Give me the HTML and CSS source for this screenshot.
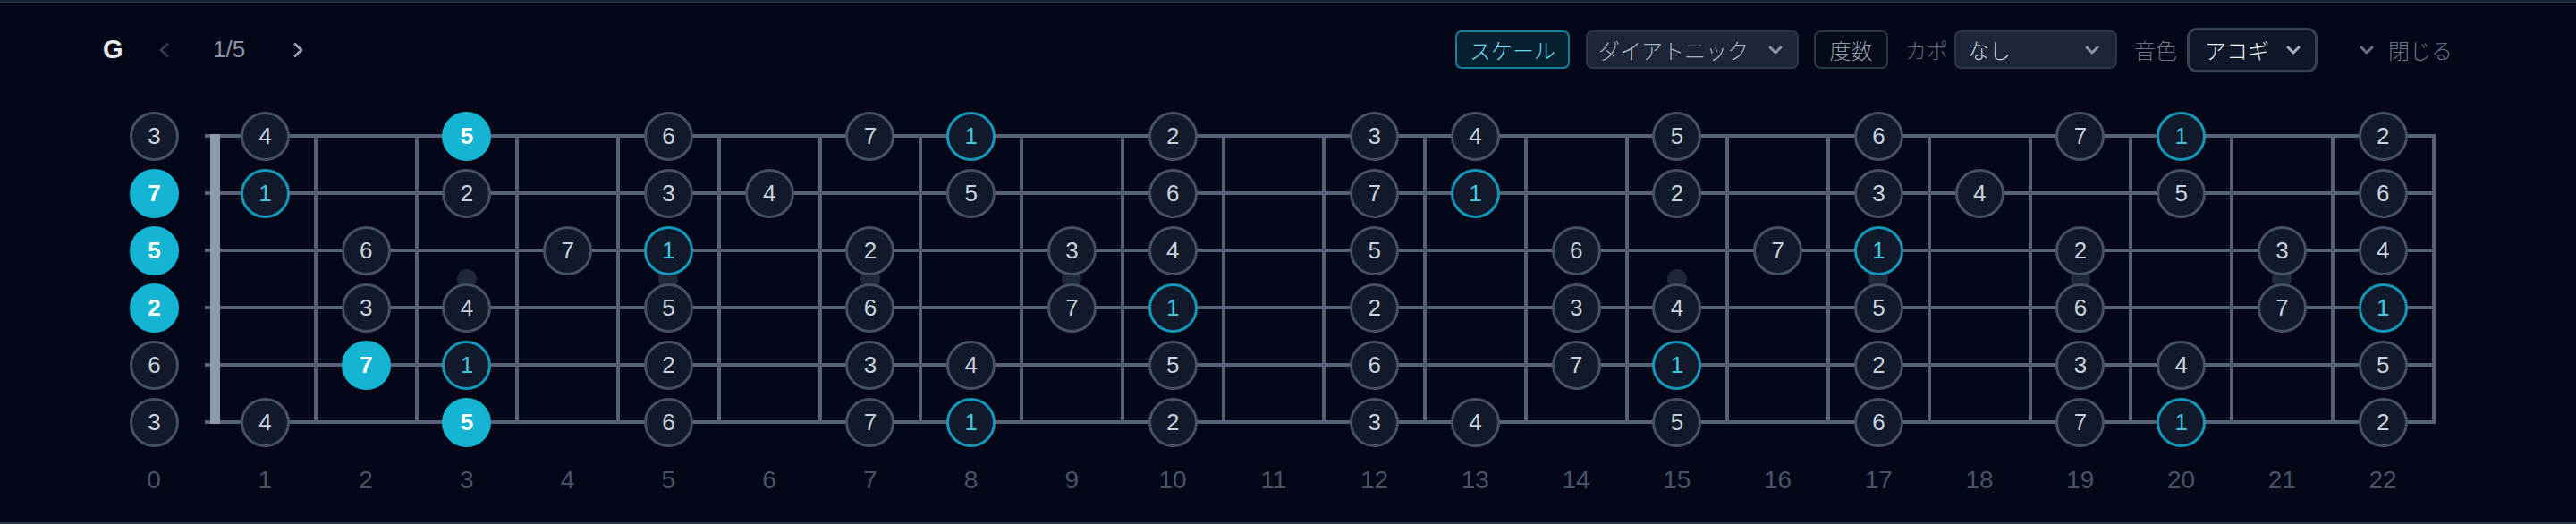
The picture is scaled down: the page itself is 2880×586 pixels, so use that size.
FILE: index.html
```html
<!DOCTYPE html>
<html lang="ja">
<head>
<meta charset="utf-8">
<title>Fretboard</title>
<link rel="stylesheet" href="styles.css">
</head>
<body>
<div class="app">
  <div class="topstrip"></div>
  <header class="toolbar">
    <div class="nav">
      <span class="key">G</span>
      <svg class="chev-l" width="12" height="16" viewBox="0 0 12 16"><polyline points="10,1.5 3,8 10,14.5" /></svg>
      <span class="page">1/5</span>
      <svg class="chev-r" width="12" height="16" viewBox="0 0 12 16"><polyline points="2,1.5 9,8 2,14.5" /></svg>
    </div>
    <div class="controls">
      <button class="btn btn-scale">スケール</button>
      <div class="select sel-scale"><span>ダイアトニック</span><svg class="dd" width="16" height="10" viewBox="0 0 16 10"><polyline points="2,2 8,8 14,2" /></svg></div>
      <button class="btn btn-deg">度数</button>
      <span class="label lbl-capo">カポ</span>
      <div class="select sel-capo"><span>なし</span><svg class="dd" width="16" height="10" viewBox="0 0 16 10"><polyline points="2,2 8,8 14,2" /></svg></div>
      <span class="label lbl-tone">音色</span>
      <div class="select sel-tone"><span>アコギ</span><svg class="dd" width="16" height="10" viewBox="0 0 16 10"><polyline points="2,2 8,8 14,2" /></svg></div>
      <div class="close"><svg class="dd" width="16" height="10" viewBox="0 0 16 10"><polyline points="2,2 8,8 14,2" /></svg><span class="close-text">閉じる</span></div>
    </div>
  </header>

  <section class="neck">
    <div class="open">
      <div class="note">3</div>
      <div class="note fill">7</div>
      <div class="note fill">5</div>
      <div class="note fill">2</div>
      <div class="note">6</div>
      <div class="note">3</div>
    </div>
    <div class="board">
      <div class="string s1"></div><div class="string s2"></div><div class="string s3"></div>
      <div class="string s4"></div><div class="string s5"></div><div class="string s6"></div>

      <div class="wire f1"></div><div class="wire f2"></div><div class="wire f3"></div><div class="wire f4"></div>
      <div class="wire f5"></div><div class="wire f6"></div><div class="wire f7"></div><div class="wire f8"></div>
      <div class="wire f9"></div><div class="wire f10"></div><div class="wire f11"></div><div class="wire f12"></div>
      <div class="wire f13"></div><div class="wire f14"></div><div class="wire f15"></div><div class="wire f16"></div>
      <div class="wire f17"></div><div class="wire f18"></div><div class="wire f19"></div><div class="wire f20"></div>
      <div class="wire f21"></div><div class="wire f22"></div>
      <div class="nut"></div>

      <div class="mark f3"></div><div class="mark f5"></div><div class="mark f7"></div><div class="mark f9"></div>
      <div class="mark f15"></div><div class="mark f17"></div><div class="mark f19"></div><div class="mark f21"></div>

      <!-- string 1 -->
      <div class="note s1 f1">4</div><div class="note fill s1 f3">5</div><div class="note s1 f5">6</div>
      <div class="note s1 f7">7</div><div class="note root s1 f8">1</div><div class="note s1 f10">2</div>
      <div class="note s1 f12">3</div><div class="note s1 f13">4</div><div class="note s1 f15">5</div>
      <div class="note s1 f17">6</div><div class="note s1 f19">7</div><div class="note root s1 f20">1</div>
      <div class="note s1 f22">2</div>
      <!-- string 2 -->
      <div class="note root s2 f1">1</div><div class="note s2 f3">2</div><div class="note s2 f5">3</div>
      <div class="note s2 f6">4</div><div class="note s2 f8">5</div><div class="note s2 f10">6</div>
      <div class="note s2 f12">7</div><div class="note root s2 f13">1</div><div class="note s2 f15">2</div>
      <div class="note s2 f17">3</div><div class="note s2 f18">4</div><div class="note s2 f20">5</div>
      <div class="note s2 f22">6</div>
      <!-- string 3 -->
      <div class="note s3 f2">6</div><div class="note s3 f4">7</div><div class="note root s3 f5">1</div>
      <div class="note s3 f7">2</div><div class="note s3 f9">3</div><div class="note s3 f10">4</div>
      <div class="note s3 f12">5</div><div class="note s3 f14">6</div><div class="note s3 f16">7</div>
      <div class="note root s3 f17">1</div><div class="note s3 f19">2</div><div class="note s3 f21">3</div>
      <div class="note s3 f22">4</div>
      <!-- string 4 -->
      <div class="note s4 f2">3</div><div class="note s4 f3">4</div><div class="note s4 f5">5</div>
      <div class="note s4 f7">6</div><div class="note s4 f9">7</div><div class="note root s4 f10">1</div>
      <div class="note s4 f12">2</div><div class="note s4 f14">3</div><div class="note s4 f15">4</div>
      <div class="note s4 f17">5</div><div class="note s4 f19">6</div><div class="note s4 f21">7</div>
      <div class="note root s4 f22">1</div>
      <!-- string 5 -->
      <div class="note fill s5 f2">7</div><div class="note root s5 f3">1</div><div class="note s5 f5">2</div>
      <div class="note s5 f7">3</div><div class="note s5 f8">4</div><div class="note s5 f10">5</div>
      <div class="note s5 f12">6</div><div class="note s5 f14">7</div><div class="note root s5 f15">1</div>
      <div class="note s5 f17">2</div><div class="note s5 f19">3</div><div class="note s5 f20">4</div>
      <div class="note s5 f22">5</div>
      <!-- string 6 -->
      <div class="note s6 f1">4</div><div class="note fill s6 f3">5</div><div class="note s6 f5">6</div>
      <div class="note s6 f7">7</div><div class="note root s6 f8">1</div><div class="note s6 f10">2</div>
      <div class="note s6 f12">3</div><div class="note s6 f13">4</div><div class="note s6 f15">5</div>
      <div class="note s6 f17">6</div><div class="note s6 f19">7</div><div class="note root s6 f20">1</div>
      <div class="note s6 f22">2</div>
    </div>
  </section>

  <div class="numbers">
    <span class="num0">0</span>
    <div class="numgrid">
      <span>1</span><span>2</span><span>3</span><span>4</span><span>5</span><span>6</span><span>7</span><span>8</span>
      <span>9</span><span>10</span><span>11</span><span>12</span><span>13</span><span>14</span><span>15</span><span>16</span>
      <span>17</span><span>18</span><span>19</span><span>20</span><span>21</span><span>22</span>
    </div>
  </div>
</div>
</body>
</html>
```

FILE: styles.css
```css
* { box-sizing: border-box; }
html, body { margin: 0; padding: 0; }
body {
  background: #030717;
  font-family: "Liberation Sans", Arial, sans-serif;
}
.app {
  width: 2880px;
  height: 586px;
  display: flex;
  flex-direction: column;
  background: #030717;
  border-bottom: 2px solid #2a3548;
}
.topstrip {
  height: 3px;
  background: #172033;
  border-bottom: 1px solid #263146;
  flex: none;
}

/* ---------- toolbar ---------- */
.toolbar {
  height: 105px;
  flex: none;
  display: flex;
  align-items: center;
  padding: 0 138px 0 115px;
}
.nav { display: flex; align-items: center; }
.key {
  font-weight: 700;
  font-size: 29px;
  color: #e8ebf0;
  width: 22px;
}
.nav svg polyline { fill: none; stroke-width: 3; stroke-linecap: round; stroke-linejoin: round; }
.chev-l { margin-left: 40px; }
.chev-l polyline { stroke: #323a4a; }
.chev-r polyline { stroke: #98a3b5; }
.page {
  margin-left: 49px;
  width: 40px;
  font-size: 26px;
  color: #8893a5;
}
.chev-r { margin-left: 50px; }

.controls {
  margin-left: auto;
  display: flex;
  align-items: center;
  font-family: "Noto Sans CJK JP", "Liberation Sans", sans-serif;
  font-size: 24px;
  font-weight: 300;
  line-height: 1;
}
.btn {
  font: inherit;
  height: 43px;
  border-radius: 7px;
  padding: 0;
  display: flex;
  align-items: center;
  justify-content: center;
}
.btn-scale {
  width: 128px;
  background: #06202f;
  border: 2px solid #12809e;
  color: #6fd9ee;
}
.btn-deg {
  width: 83px;
  margin-left: 17px;
  background: #060b18;
  border: 2px solid #2c3748;
  color: #939dae;
}
.select {
  height: 43px;
  border-radius: 7px;
  display: flex;
  align-items: center;
  justify-content: space-between;
  background: #1c2638;
  border: 2px solid #2b3649;
}
.dd { flex: none; }
.dd polyline { fill: none; stroke-width: 3; stroke-linecap: round; stroke-linejoin: round; }
.sel-scale {
  width: 238px;
  margin-left: 18px;
  padding: 0 16px 0 12px;
  color: #a9b3c2;
}
.sel-scale .dd polyline { stroke: #8a94a6; }
.label { color: #5d6779; }
.lbl-capo { margin-left: 19px; width: 55px; }
.sel-capo {
  width: 182px;
  padding: 0 18px 0 13px;
  color: #d0d7e2;
}
.sel-capo .dd polyline { stroke: #8a94a6; }
.lbl-tone { margin-left: 19px; width: 59px; color: #6b7588; }
.sel-tone {
  width: 146px;
  height: 50px;
  border-radius: 11px;
  background: #0f1728;
  border: 3px solid #374355;
  padding: 0 16px 0 17px;
  color: #eef2f7;
}
.sel-tone .dd polyline { stroke: #a7b0bf; }
.close {
  margin-left: 47px;
  display: flex;
  align-items: center;
  color: #697386;
}
.close .dd { margin-right: 16px; }
.close .dd polyline { stroke: #697386; }
.close-text { width: 72px; }

/* ---------- neck ---------- */
.neck {
  margin-top: 12px;
  display: flex;
  padding-left: 145px;
  flex: none;
}
.open {
  width: 54px;
  margin-right: 41px;
  display: grid;
  grid-template-rows: repeat(6, 64px);
  justify-items: center;
  align-items: center;
}
.board {
  display: grid;
  grid-template-columns: repeat(22, 112.75px);
  grid-template-rows: repeat(6, 64px);
}
.s1 { grid-row: 1; } .s2 { grid-row: 2; } .s3 { grid-row: 3; }
.s4 { grid-row: 4; } .s5 { grid-row: 5; } .s6 { grid-row: 6; }
.f1 { grid-column: 1; } .f2 { grid-column: 2; } .f3 { grid-column: 3; } .f4 { grid-column: 4; }
.f5 { grid-column: 5; } .f6 { grid-column: 6; } .f7 { grid-column: 7; } .f8 { grid-column: 8; }
.f9 { grid-column: 9; } .f10 { grid-column: 10; } .f11 { grid-column: 11; } .f12 { grid-column: 12; }
.f13 { grid-column: 13; } .f14 { grid-column: 14; } .f15 { grid-column: 15; } .f16 { grid-column: 16; }
.f17 { grid-column: 17; } .f18 { grid-column: 18; } .f19 { grid-column: 19; } .f20 { grid-column: 20; }
.f21 { grid-column: 21; } .f22 { grid-column: 22; }

.string {
  grid-column: 1 / -1;
  align-self: center;
  height: 4px;
  margin-left: -11px;
  margin-right: -1px;
  background: #586276;
}
.wire {
  grid-row: 1 / 7;
  justify-self: end;
  width: 4px;
  margin: 30px -2px 30px 0;
  background: #576175;
}
.nut {
  grid-column: 1;
  grid-row: 1 / 7;
  justify-self: start;
  width: 11px;
  margin: 30px 0 30px -5.5px;
  background: #8d99ad;
}
.mark {
  grid-row: 3 / 5;
  align-self: center;
  justify-self: center;
  width: 22px;
  height: 22px;
  border-radius: 50%;
  background: #1f2836;
}
.note {
  width: 55px;
  height: 55px;
  border-radius: 50%;
  justify-self: center;
  align-self: center;
  display: flex;
  align-items: center;
  justify-content: center;
  background: #111a2a;
  border: 3px solid #465163;
  color: #c8d1de;
  font-size: 26px;
  line-height: 1;
}
.note.root {
  border-color: #1597b9;
  color: #3fc6e1;
}
.note.fill {
  background: #14b4d3;
  border-color: #14b4d3;
  color: #ffffff;
  font-weight: 700;
}

/* ---------- fret numbers ---------- */
.numbers {
  display: flex;
  align-items: center;
  height: 66px;
  padding-left: 145px;
  flex: none;
  color: #485366;
  font-size: 28px;
}
.num0 { width: 54px; margin-right: 41px; text-align: center; }
.numgrid {
  display: grid;
  grid-template-columns: repeat(22, 112.75px);
}
.numgrid span { text-align: center; }
```
